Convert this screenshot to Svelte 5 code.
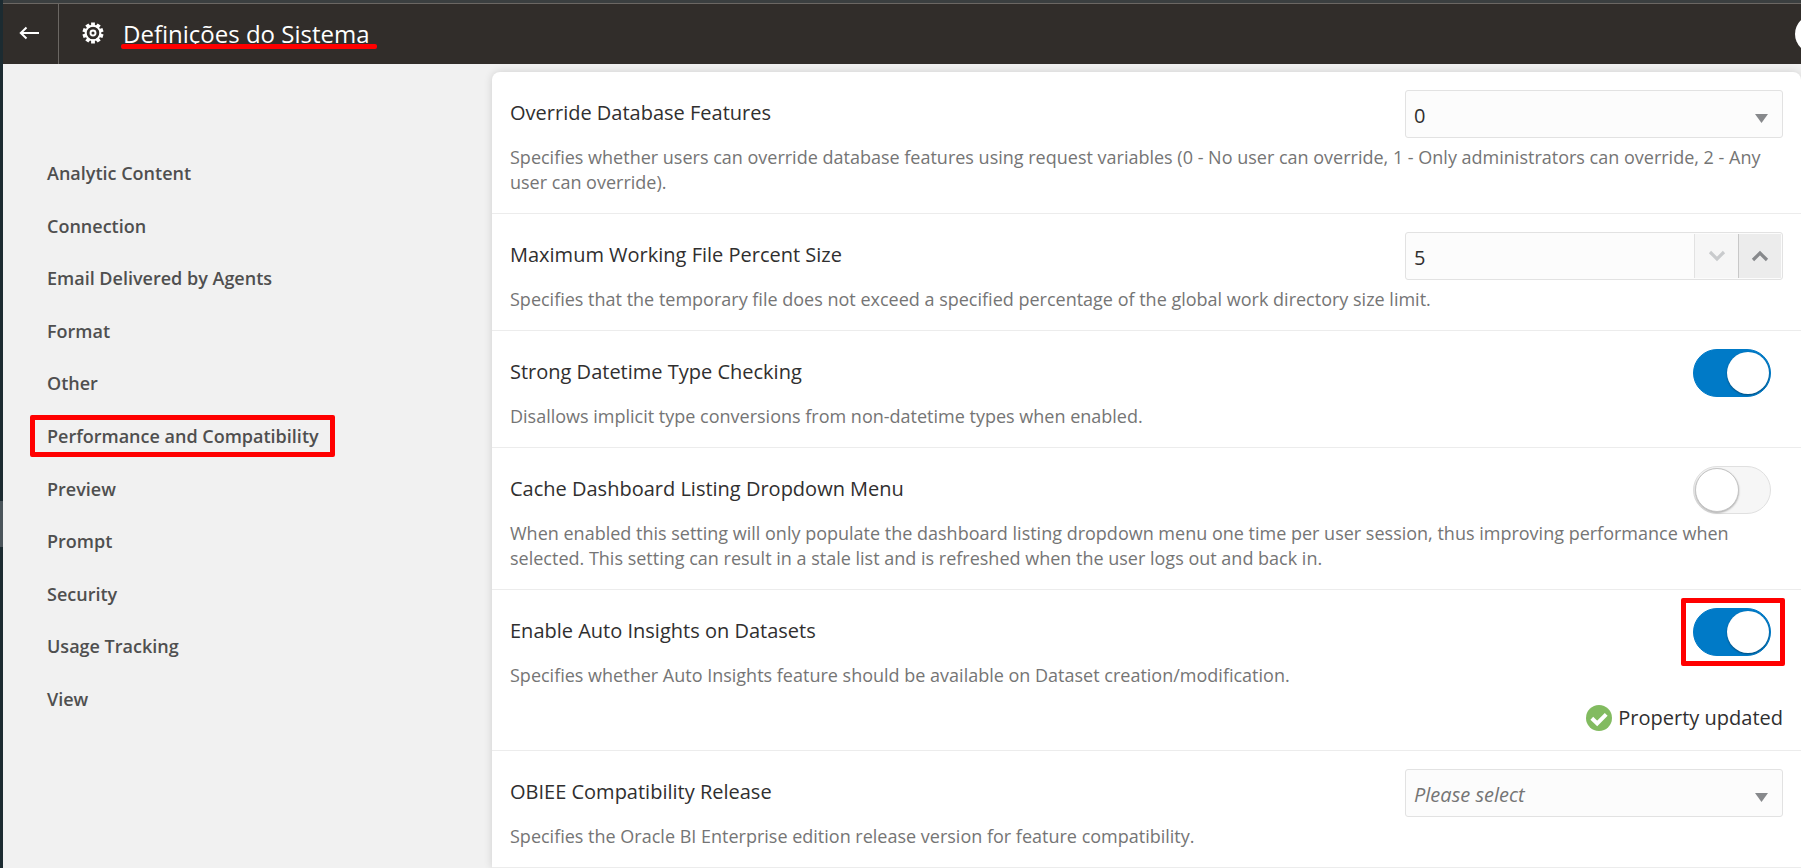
<script>
  let settings = $state([
    { id: 'override', title: 'Override Database Features', kind: 'select', value: '0', options: ['0', '1', '2'],
      text: 'Specifies whether users can override database features using request variables (0 - No user can override, 1 - Only administrators can override, 2 - Any user can override).' },
    { id: 'filesize', title: 'Maximum Working File Percent Size', kind: 'number', value: '5',
      text: 'Specifies that the temporary file does not exceed a specified percentage of the global work directory size limit.' },
    { id: 'datetime', title: 'Strong Datetime Type Checking', kind: 'switch', on: true,
      text: 'Disallows implicit type conversions from non-datetime types when enabled.' },
    { id: 'cache', title: 'Cache Dashboard Listing Dropdown Menu', kind: 'switch', on: false,
      text: 'When enabled this setting will only populate the dashboard listing dropdown menu one time per user session, thus improving performance when selected. This setting can result in a stale list and is refreshed when the user logs out and back in.' },
    { id: 'insights', title: 'Enable Auto Insights on Datasets', kind: 'switch', on: true, marked: true, status: 'Property updated',
      text: 'Specifies whether Auto Insights feature should be available on Dataset creation/modification.' },
    { id: 'release', title: 'OBIEE Compatibility Release', kind: 'select', value: '', placeholder: 'Please select', options: [],
      text: 'Specifies the Oracle BI Enterprise edition release version for feature compatibility.' }
  ]);

  const sections = ['Analytic Content', 'Connection', 'Email Delivered by Agents', 'Format', 'Other',
    'Performance and Compatibility', 'Preview', 'Prompt', 'Security', 'Usage Tracking', 'View'];
  const current = 'Performance and Compatibility';

  const teeth = [0, 36, 72, 108, 144, 180, 216, 252, 288, 324];

  function step(item, by) {
    item.value = String(Math.max(5, Number(item.value) + by));
  }
</script>

<div class="page">
  <div class="edge"><span class="thumb"></span></div>
  <div class="app">
    <header>
      <button class="back" aria-label="Back">
        <svg width="20" height="14" viewBox="0 0 20 14" fill="none" stroke="#fff" stroke-width="2">
          <path d="M20 7H2M7.500 1.500L1.800 7l5.700 5.500" />
        </svg>
      </button>
      <div class="heading">
        <svg width="22" height="22" viewBox="-11 -11 22 22">
          {#each teeth as angle}
            <rect x="-1.900" y="-10.500" width="3.800" height="4" fill="#fff" transform="rotate({angle})" />
          {/each}
          <circle r="7.300" fill="none" stroke="#fff" stroke-width="2" />
          <circle r="2.500" fill="none" stroke="#fff" stroke-width="1.900" />
        </svg>
        <h1>Definições do Sistema</h1>
      </div>
      <span class="avatar"></span>
    </header>

    <div class="body">
      <nav>
        <ul>
          {#each sections as name}
            <li><a href="#top" class:marked={name === current}>{name}</a></li>
          {/each}
        </ul>
      </nav>

      <main>
        {#each settings as item}
          <section>
            <div class="top">
              <label for={item.id}>{item.title}</label>
              {#if item.kind === 'select'}
                <div class="field">
                  <select id={item.id} bind:value={item.value} class:empty={!item.value}>
                    {#if item.placeholder}<option value="">{item.placeholder}</option>{/if}
                    {#each item.options as option}<option value={option}>{option}</option>{/each}
                  </select>
                  <svg class="arrow" width="13" height="9" viewBox="0 0 13 9"><path d="M0 0h13L6.500 9z" fill="#87898c" /></svg>
                </div>
              {:else if item.kind === 'number'}
                <div class="field">
                  <input id={item.id} type="text" inputmode="numeric" bind:value={item.value} />
                  <button class="down" aria-label="Decrease" onclick={() => step(item, -1)}>
                    <svg width="18" height="12" viewBox="0 0 18 12" fill="none" stroke="#c9cbcd" stroke-width="3.200"><path d="M2 2l7 7 7-7" /></svg>
                  </button>
                  <button class="up" aria-label="Increase" onclick={() => step(item, 1)}>
                    <svg width="18" height="12" viewBox="0 0 18 12" fill="none" stroke="#87898c" stroke-width="3.200"><path d="M2 10l7-7 7 7" /></svg>
                  </button>
                </div>
              {:else}
                <div class="switch" class:marked={item.marked}>
                  <input id={item.id} type="checkbox" role="switch" bind:checked={item.on} />
                </div>
              {/if}
            </div>
            <p>{item.text}</p>
            {#if item.status}
              <div class="status">
                <svg width="26" height="26" viewBox="0 0 26 26">
                  <circle cx="13" cy="13" r="13" fill="#82bb60" />
                  <path d="M5.800 13.200l5.400 5.200 9-9" fill="none" stroke="#fff" stroke-width="4" />
                </svg>
                <span>{item.status}</span>
              </div>
            {/if}
          </section>
        {/each}
      </main>
    </div>
  </div>
</div>

<style>
  :global(body) {
    margin: 0;
    background: #f1f1f1;
  }
  .page {
    display: flex;
    height: 100vh;
    overflow: hidden;
    font-family: "Open Sans", "Noto Sans", sans-serif;
    color: #302f2f;
  }
  .edge {
    flex: none;
    width: 3px;
    padding-top: 501px;
    box-sizing: border-box;
    background: #1c2b31;
  }
  .thumb {
    display: block;
    height: 46px;
    background: #4b555b;
  }
  .app {
    flex: 1;
    min-width: 0;
    overflow: hidden;
  }
  header {
    display: flex;
    height: 60px;
    border-top: 1px solid #6b6763;
    background: #312d2a;
    box-shadow: 0 -3px #3b3f40;
    margin-top: 3px;
  }
  button {
    display: flex;
    align-items: center;
    justify-content: center;
    padding: 0;
    border: 0;
  }
  .back {
    width: 56px;
    padding: 0 4px 2px 0;
    border-right: 1px solid #6b6763;
    background: none;
  }
  .heading {
    display: flex;
    align-items: center;
    gap: 19px;
    flex: 1;
    padding-left: 23px;
  }
  .heading svg {
    margin-bottom: 2px;
  }
  h1 {
    position: relative;
    margin: 0;
    font-size: 24px;
    line-height: 32px;
    font-weight: 400;
    color: #fff;
  }
  h1::after {
    content: "";
    position: absolute;
    left: -2px;
    right: -8px;
    bottom: 1px;
    height: 5px;
    border-radius: 2px;
    background: #f00;
  }
  .avatar {
    flex: none;
    align-self: center;
    width: 38px;
    height: 38px;
    margin-right: -32px;
    border-radius: 50%;
    background: #fff;
  }
  .body {
    display: flex;
    padding-top: 8px;
  }
  nav {
    flex: none;
    width: 489px;
    padding-top: 75px;
  }
  ul {
    display: grid;
    grid-auto-rows: 1fr;
    align-items: center;
    min-height: 578px;
    margin: 0;
    padding: 0 0 0 44px;
    list-style: none;
  }
  a {
    position: relative;
    font-size: 18px;
    line-height: 24px;
    font-weight: 600;
    color: #4f4f4f;
    text-decoration: none;
  }
  .marked::after {
    content: "";
    position: absolute;
    inset: -9px -16px -9px -17px;
    border: 5px solid #f00;
    border-radius: 2px;
    pointer-events: none;
  }
  main {
    flex: 1;
    min-width: 0;
    border-radius: 8px 8px 0 0;
    background: #fff;
    box-shadow: 0 0 8px rgba(0, 0, 0, 0.14);
  }
  section {
    padding: 18px;
    border-bottom: 1px solid #ececec;
  }
  .top {
    display: flex;
    justify-content: space-between;
    align-items: center;
    height: 48px;
    margin-bottom: 7px;
  }
  label {
    padding-bottom: 2px;
    font-size: 20px;
    line-height: 28px;
  }
  p {
    margin: 0;
    font-size: 18px;
    line-height: 25px;
    color: #757575;
  }
  .field {
    position: relative;
    display: flex;
    box-sizing: border-box;
    width: 378px;
    height: 48px;
    padding: 1px;
    border: 1px solid #e2e2e2;
    border-radius: 3px;
    background: #fcfcfc;
  }
  select,
  .field input {
    flex: 1;
    min-width: 0;
    padding: 3px 8px 0 7px;
    border: 0;
    appearance: none;
    background: none;
    font: inherit;
    font-size: 20px;
    color: #302f2f;
  }
  select.empty {
    font-style: italic;
    color: #757575;
  }
  .arrow {
    position: absolute;
    right: 14px;
    top: 23px;
    pointer-events: none;
  }
  .down,
  .up {
    width: 44px;
    border-left: 1px solid #e2e2e2;
    background: #f6f6f6;
  }
  .up {
    width: 43px;
    border-color: #c8c8c8;
    background: #ececec;
  }
  .switch {
    position: relative;
    margin-right: 12px;
    height: 48px;
  }
  .switch.marked::after {
    inset: -10px -14px -10px -12px;
  }
  .switch input {
    display: flex;
    box-sizing: border-box;
    width: 78px;
    height: 48px;
    margin: 0;
    padding: 1px;
    border: 1px solid #e0e0e0;
    border-radius: 24px;
    appearance: none;
    background: #f6f6f6;
  }
  .switch input::before {
    content: "";
    box-sizing: border-box;
    width: 44px;
    height: 44px;
    border: 1px solid #c4c4c4;
    border-radius: 50%;
    background: #fff;
    box-shadow: 0 1px 2px rgba(0, 0, 0, 0.3);
  }
  .switch input:checked {
    justify-content: flex-end;
    padding: 2px 1px;
    border-color: #007ac7;
    background: #007ac7;
  }
  .switch input:checked::before {
    width: 42px;
    height: 42px;
    border: 0;
    box-shadow: 0 1px 2px rgba(0, 0, 0, 0.4);
  }
  .status {
    display: flex;
    justify-content: flex-end;
    align-items: center;
    gap: 6px;
    margin-top: 16px;
    font-size: 20px;
    line-height: 28px;
  }
</style>
